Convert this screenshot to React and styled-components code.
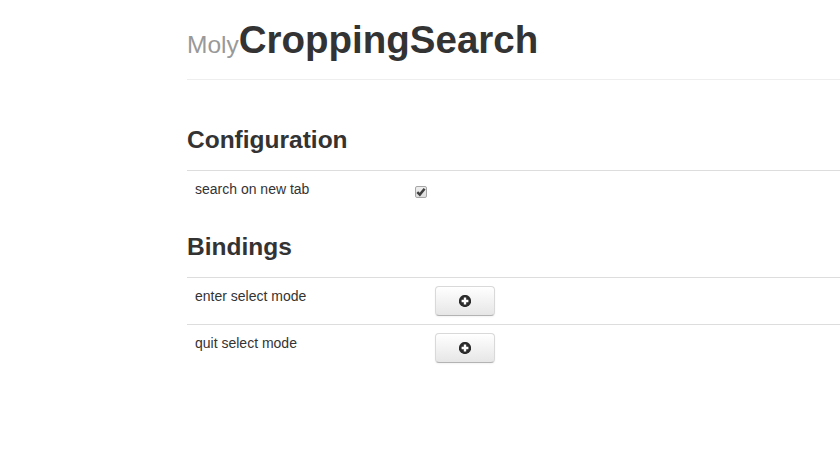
import styled, { createGlobalStyle } from 'styled-components';

const GlobalStyle = createGlobalStyle`
    body {
        margin: 0;
        background: #fff;
        color: #333;
        font-family: "Liberation Sans", Arial, sans-serif;
        font-size: 14px;
        line-height: 20px;
    }
`;

const Container = styled.div`
    margin-left: 187px;
`;

const PageHeader = styled.header`
    padding: 20px 0 19px;
    margin-bottom: 40px;
    border-bottom: 1px solid #eee;
`;

const Title = styled.h1`
    margin: 0;
    font-size: 38.5px;
    line-height: 40px;
    white-space: nowrap;
`;

const TitlePrefix = styled.small`
    color: #999;
    font-size: 24.5px;
    font-weight: normal;
    line-height: 1;
`;

const Section = styled.section`
    margin-bottom: 20px;
`;

const SectionTitle = styled.h3`
    margin: 0 0 10px;
    font-size: 24.5px;
    line-height: 40px;
`;

const Row = styled.div`
    display: grid;
    grid-template-columns: ${({ $labelWidth }) => $labelWidth} 1fr;
    align-items: start;
    padding: 8px;
    border-top: 1px solid #ddd;
`;

const Label = styled.label`
    height: 20px;
`;

const CheckboxHolder = styled.span`
    display: grid;
    justify-content: start;

    > * {
        grid-area: 1 / 1;
    }
`;

const Checkbox = styled.input`
    appearance: none;
    display: block;
    box-sizing: border-box;
    width: 12px;
    height: 12px;
    margin: 7px 0 1px;
    border: 1px solid #a6a6a6;
    border-radius: 2px;
    background: linear-gradient(#eee, #dedede);
`;

const CheckMark = styled.svg`
    width: 12px;
    height: 12px;
    margin-top: 7px;
    pointer-events: none;
`;

const Button = styled.button`
    display: flex;
    align-items: center;
    justify-content: center;
    box-sizing: border-box;
    width: 60px;
    height: 30px;
    padding: 0;
    border: 1px solid #ccc;
    border-color: #d9d9d9 #d9d9d9 #b3b3b3;
    border-radius: 4px;
    background: linear-gradient(#fff, #e6e6e6);
    box-shadow: inset 0 1px 0 rgba(255, 255, 255, .2), 0 1px 2px rgba(0, 0, 0, .05);
    cursor: pointer;
`;

const PlusSign = () => (
    <svg width="12" height="12" viewBox="0 0 12 12">
        <circle cx="6" cy="6" r="6.1" fill="#2b2b2b" />
        <path d="M4.8 2.6h2.4v2.2h2.2v2.4H7.2v2.2H4.8V7.2H2.6V4.8h2.2z" fill="#fff" />
    </svg>
);

const bindings = ['enter select mode', 'quit select mode'];

const App = () => {
    return (
        <Container>
            <GlobalStyle />
            <PageHeader>
                <Title><TitlePrefix>Moly</TitlePrefix>CroppingSearch</Title>
            </PageHeader>
            <Section>
                <SectionTitle>Configuration</SectionTitle>
                <Row $labelWidth="220px">
                    <Label htmlFor="new-tab">search on new tab</Label>
                    <CheckboxHolder>
                        <Checkbox id="new-tab" type="checkbox" defaultChecked />
                        <CheckMark viewBox="0 0 12 12">
                            <path d="M2.3 6.2 4.8 8.6 9.6 2.7" fill="none" stroke="#404040" strokeWidth="2.5" />
                        </CheckMark>
                    </CheckboxHolder>
                </Row>
            </Section>
            <Section>
                <SectionTitle>Bindings</SectionTitle>
                {bindings.map((name) => (
                    <Row key={name} $labelWidth="240px">
                        <Label>{name}</Label>
                        <Button type="button" aria-label={name}><PlusSign /></Button>
                    </Row>
                ))}
            </Section>
        </Container>
    );
};

export default App;
